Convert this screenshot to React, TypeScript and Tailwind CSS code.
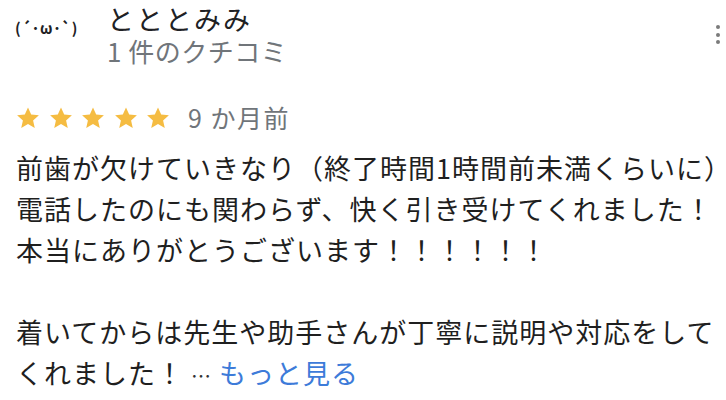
import React from "react";

const Star = () => (
  <svg width="26" height="26" viewBox="0 0 24 24" className="shrink-0">
    <path
      d="M12 2.2l2.95 6.55 7.1.72-5.35 4.78 1.55 7.02L12 17.6l-6.25 3.67 1.55-7.02L1.95 9.47l7.1-.72z"
      fill="#f5bc42"
    />
  </svg>
);

export default function App() {
  return (
    <div
      className="w-[726px] h-[400px] bg-white overflow-hidden relative"
      style={{ fontFamily: '"Noto Sans CJK JP", "Noto Sans", sans-serif' }}
    >
      <div className="flex items-start pt-[2px]">
        <div className="w-[107px] shrink-0 pl-[15px] pt-[16px] text-[15px] font-semibold text-[#202124] leading-[20px] tracking-[0.8px]">
          (´･ω･`)
        </div>
        <div className="flex flex-col">
          <div className="text-[27px] leading-[34px] text-[#202124] tracking-[2px]">とととみみ</div>
          <div className="text-[26px] leading-[30px] text-[#70757a] tracking-[0.5px]">1 件のクチコミ</div>
        </div>
      </div>
      <div className="absolute right-[6px] top-[25px] flex flex-col gap-[3.5px]">
        <span className="block w-[4px] h-[4px] rounded-full bg-[#7b7b7b]" />
        <span className="block w-[4px] h-[4px] rounded-full bg-[#7b7b7b]" />
        <span className="block w-[4px] h-[4px] rounded-full bg-[#7b7b7b]" />
      </div>
      <div className="flex items-center pl-[15px] mt-[38px] h-[30px]">
        <div className="flex gap-[6.5px] -mt-[3px]">
          <Star />
          <Star />
          <Star />
          <Star />
          <Star />
        </div>
        <span className="ml-[17px] text-[25px] text-[#70757a] tracking-[1.5px] -mt-[2px]">9 か月前</span>
      </div>
      <div className="pl-[16px] mt-[13px] text-[27px] leading-[41px] text-[#1f1f1f] tracking-[1px] whitespace-pre">
        <div>前歯が欠けていきなり（終了時間1時間前未満くらいに）</div>
        <div>電話したのにも関わらず、快く引き受けてくれました！</div>
        <div>本当にありがとうございます！！！！！！</div>
        <div>&nbsp;</div>
        <div>着いてからは先生や助手さんが丁寧に説明や対応をして</div>
        <div>
          くれました！ <span className="text-[20px] text-[#333]">…</span>
          <span className="text-[#3d7bd9]"> もっと見る</span>
        </div>
      </div>
    </div>
  );
}
